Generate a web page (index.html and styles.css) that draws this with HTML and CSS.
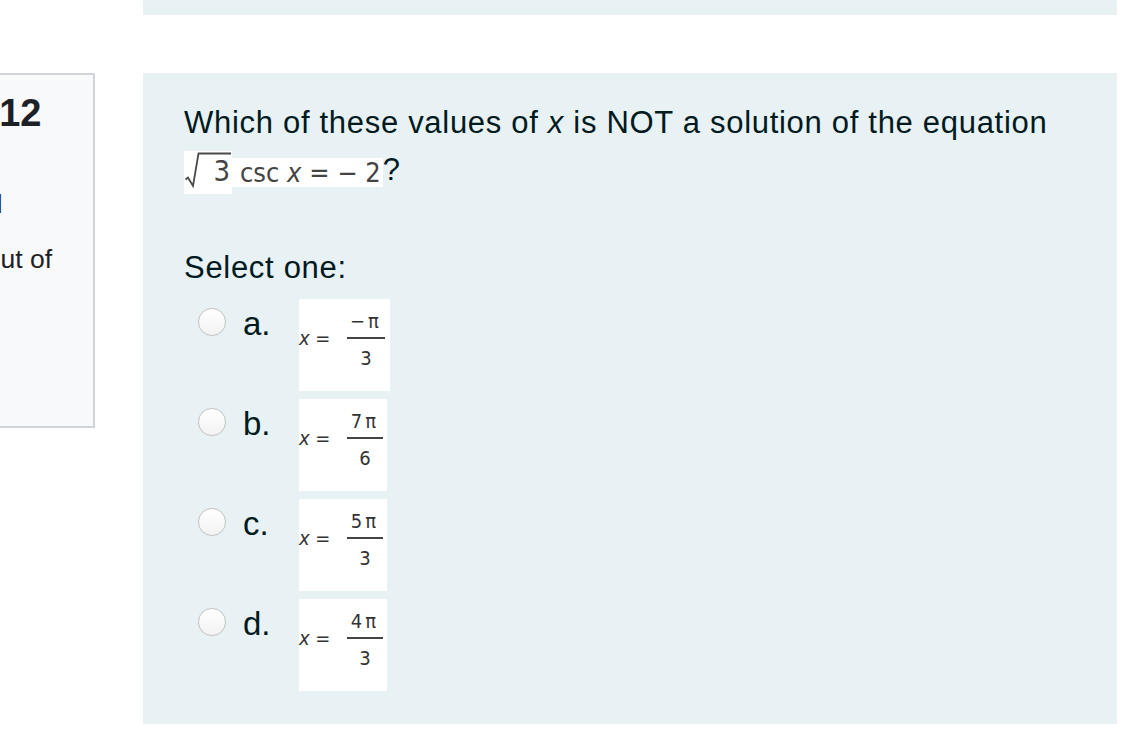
FILE: index.html
```html
<!DOCTYPE html>
<html lang="en">
<head>
<meta charset="utf-8">
<title>Question 12</title>
<link rel="stylesheet" href="styles.css">
</head>
<body>
<div class="page">
  <div class="prev"></div>
  <div class="que">
    <div class="info">
      <h3 class="no">Question <span class="qno">12</span></h3>
      <div class="state">Not yet answered</div>
      <div class="grade">Marked out of 1.00</div>
    </div>
    <div class="content">
      <div class="formulation">
        <p class="qtext">Which of these values of <i>x</i> is NOT a solution of the equation</p>
        <div class="eqline">
          <span class="mimg sqrt"><svg class="rad" width="48" height="43" viewBox="0 0 48 43"><path d="M1.5 28.5 L4 26.5 L9 35 L14.5 2.5 L47 2.5" fill="none" stroke="#4a4a4a" stroke-width="1.8"/></svg><span class="radicand">3</span></span><span class="mimg eqimg">csc <i>x</i> = − 2</span><span class="qmark">?</span>
        </div>
        <div class="prompt">Select one:</div>
        <div class="answer">
          <div class="opt">
            <span class="radio"></span><span class="lbl">a.</span>
            <span class="mbox wide"><span class="lhs"><i>x</i> =</span><span class="frac w38"><span class="num">−π</span><span class="bar"></span><span class="den">3</span></span></span>
          </div>
          <div class="opt">
            <span class="radio"></span><span class="lbl">b.</span>
            <span class="mbox"><span class="lhs"><i>x</i> =</span><span class="frac"><span class="num">7π</span><span class="bar"></span><span class="den">6</span></span></span>
          </div>
          <div class="opt">
            <span class="radio"></span><span class="lbl">c.</span>
            <span class="mbox"><span class="lhs"><i>x</i> =</span><span class="frac"><span class="num">5π</span><span class="bar"></span><span class="den">3</span></span></span>
          </div>
          <div class="opt">
            <span class="radio"></span><span class="lbl">d.</span>
            <span class="mbox"><span class="lhs"><i>x</i> =</span><span class="frac"><span class="num">4π</span><span class="bar"></span><span class="den">3</span></span></span>
          </div>
        </div>
      </div>
    </div>
  </div>
</div>
</body>
</html>
```
FILE: styles.css
```css
html, body {
  margin: 0;
  padding: 0;
  background: #ffffff;
  overflow: hidden;
}

body {
  font-family: "Liberation Sans", Arial, sans-serif;
  color: #1d2125;
}

.page {
  width: 1122px;
  height: 732px;
}

.prev {
  margin-left: 143px;
  width: 974px;
  height: 15px;
  background: #e8f1f4;
}

.que {
  display: flex;
  align-items: flex-start;
  margin-top: 58px;
}

.info {
  flex: none;
  box-sizing: border-box;
  width: 223px;
  height: 355px;
  margin-left: -128px;
  padding: 15px 23px 0 16px;
  border: 2px solid #cfd5db;
  background: #f8f9fa;
  color: #1d2125;
}

.no {
  margin: 0;
  font-size: 25.5px;
  line-height: 46px;
  font-weight: normal;
}

.qno {
  font-size: 38px;
  font-weight: bold;
}

.state,
.grade {
  font-size: 26.5px;
  line-height: 38px;
}

.state {
  margin-top: 6.5px;
  margin-left: -2.5px;
}

.grade {
  margin-top: 17px;
}

.content {
  flex: none;
  margin-left: 48px;
}

.formulation {
  box-sizing: border-box;
  width: 974px;
  height: 651px;
  padding: 26px 30px 0 41px;
  background: #e8f1f4;
  color: #001a1e;
}

.qtext {
  margin: 0;
  font-size: 31px;
  line-height: 47px;
  letter-spacing: 0.7px;
}

.eqline {
  display: flex;
  align-items: flex-start;
  margin-top: 5px;
}

.mimg {
  background: #ffffff;
  font-family: "DejaVu Sans Condensed", "Liberation Sans Narrow", "DejaVu Sans", sans-serif;
  font-stretch: condensed;
  color: #444444;
}

.sqrt {
  display: flex;
  align-items: flex-start;
  width: 48px;
  height: 43px;
}

.rad {
  display: block;
  flex: none;
}

.radicand {
  flex: none;
  box-sizing: border-box;
  width: 33px;
  margin: 5px 0 0 -33px;
  padding-right: 2px;
  font-size: 29px;
  line-height: 30px;
  text-align: right;
}

.eqimg {
  box-sizing: border-box;
  height: 29px;
  margin-top: 7px;
  padding: 0 2px 0 8px;
  font-size: 27px;
  line-height: 29px;
  white-space: nowrap;
}

.qmark {
  margin-top: 3px;
  font-size: 31px;
  line-height: 31px;
}

.prompt {
  margin-top: 50px;
  font-size: 31px;
  line-height: 47px;
  letter-spacing: 0.7px;
}

.answer {
  margin-top: 8px;
}

.opt {
  display: flex;
  align-items: flex-start;
  margin-bottom: 8px;
}

.radio {
  flex: none;
  box-sizing: border-box;
  width: 28px;
  height: 28px;
  margin: 9px 0 0 14px;
  border-radius: 50%;
  border: 1px solid #c6c6c6;
  background: linear-gradient(#ffffff, #f3f3f3);
  box-shadow: 0 0 1px rgba(0, 0, 0, 0.12);
}

.lbl {
  flex: none;
  width: 56px;
  margin: 5px 0 0 17px;
  font-size: 33px;
  line-height: 40px;
}

.mbox {
  flex: none;
  display: flex;
  align-items: flex-start;
  width: 88px;
  height: 92px;
  background: #ffffff;
  font-family: "DejaVu Sans Condensed", "Liberation Sans Narrow", "DejaVu Sans", sans-serif;
  font-stretch: condensed;
  font-size: 20px;
  color: #333333;
}

.mbox.wide {
  width: 91px;
}

.lhs {
  flex: none;
  width: 48px;
  margin-top: 30px;
  line-height: 18px;
  white-space: pre;
}

.frac {
  flex: none;
  display: flex;
  flex-direction: column;
  align-items: center;
  width: 36px;
  margin-top: 13px;
}

.frac.w38 {
  width: 38px;
}

.num {
  line-height: 18px;
  padding-bottom: 7px;
  letter-spacing: 3px;
}

.bar {
  align-self: stretch;
  border-top: 2px solid #444444;
}

.den {
  margin-top: 10px;
  line-height: 18px;
}
```
